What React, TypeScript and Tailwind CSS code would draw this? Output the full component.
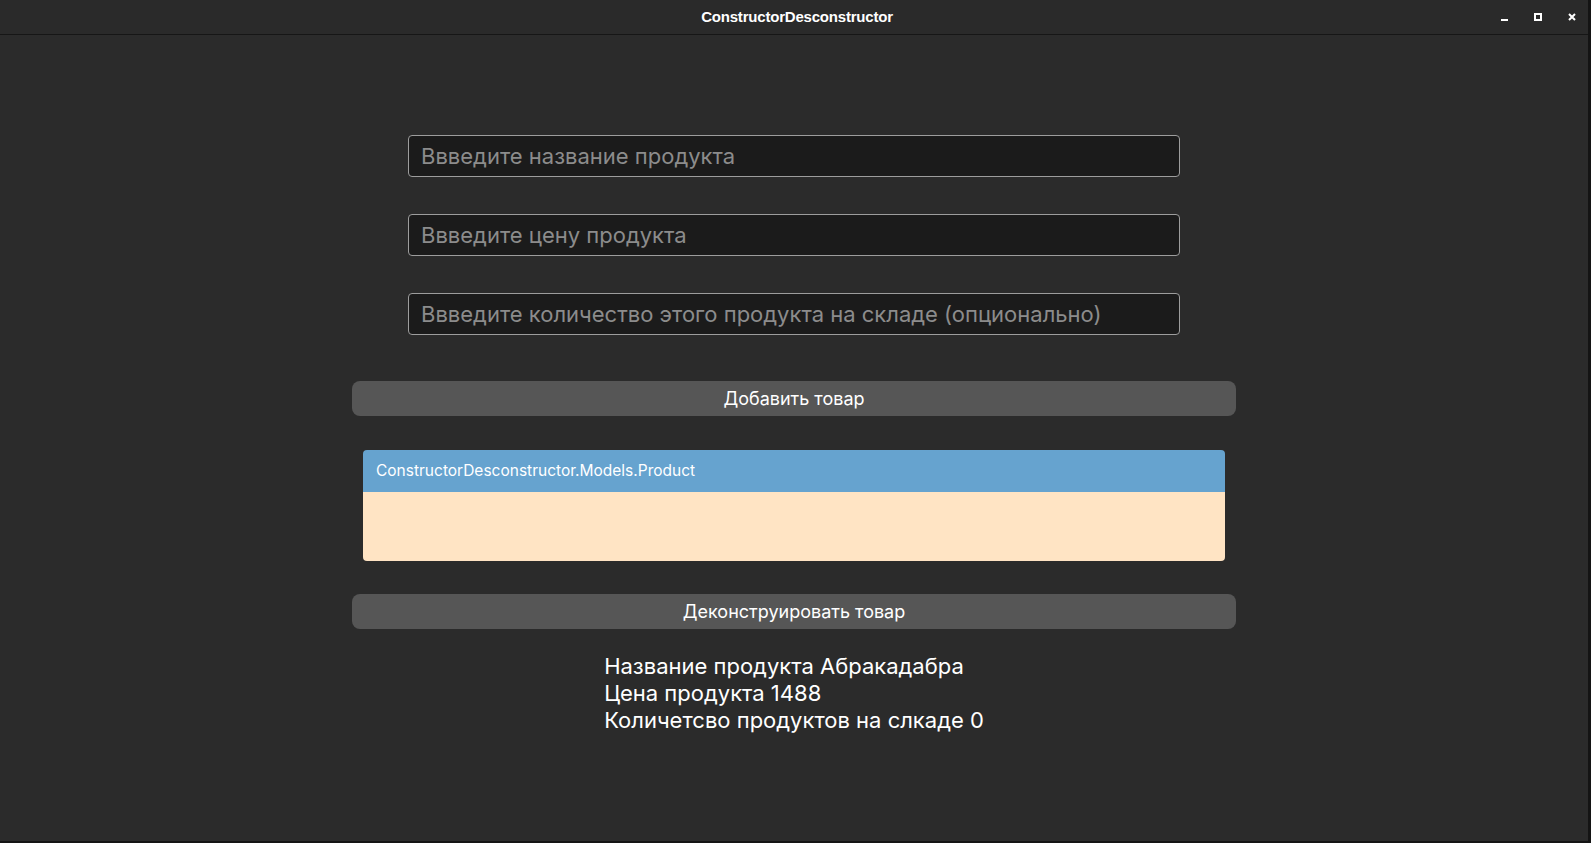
import React from "react";

export default function App() {
  return (
    <div className="w-[1591px] h-[843px] bg-[#141414] overflow-hidden flex flex-col">
      <div className="flex-1 flex flex-col mr-[3px] mb-[2px] bg-[#2b2b2b]">
        {/* Title bar */}
        <div className="h-[35px] shrink-0 bg-[#2a2a2a] border-b border-[#161616] flex items-center relative">
          <div className="flex-1 text-center text-white text-[15px] font-bold font-['Liberation_Sans',sans-serif] tracking-[-0.2px] pl-[6px]">
            ConstructorDesconstructor
          </div>
          <div className="absolute right-[12px] top-0 h-[34px] flex items-center gap-[26px]">
            <div className="w-[7px] h-[8px] flex items-end">
              <div className="w-[7px] h-[2px] bg-white" />
            </div>
            <div className="w-[8px] h-[8px] border-[2px] border-white mb-[1px]" />
            <svg width="8" height="8" viewBox="0 0 8 8" className="mb-[1px]">
              <path d="M1 1 L7 7 M7 1 L1 7" stroke="white" strokeWidth="2" />
            </svg>
          </div>
        </div>

        {/* Content */}
        <div className="flex flex-col items-center font-['Inter',sans-serif] pt-[100px]">
          <div className="w-[772px] flex flex-col gap-[37px]">
            <input
              className="h-[42px] w-full bg-[#1b1b1b] border border-[#9d9d9d] rounded-[4px] px-[12px] text-[22px] text-white placeholder:text-[#8c8c8c] outline-none"
              placeholder="Ввведите название продукта"
            />
            <input
              className="h-[42px] w-full bg-[#1b1b1b] border border-[#9d9d9d] rounded-[4px] px-[12px] text-[22px] text-white placeholder:text-[#8c8c8c] outline-none"
              placeholder="Ввведите цену продукта"
            />
            <input
              className="h-[42px] w-full bg-[#1b1b1b] border border-[#9d9d9d] rounded-[4px] px-[12px] text-[22px] text-white placeholder:text-[#8c8c8c] outline-none"
              placeholder="Ввведите количество этого продукта на складе (опционально)"
            />
          </div>

          <button className="mt-[46px] w-[884px] h-[35px] bg-[#565656] rounded-[8px] text-white text-[18px] flex items-center justify-center">
            Добавить товар
          </button>

          <div className="mt-[34px] w-[862px] rounded-[4px] overflow-hidden flex flex-col">
            <div className="h-[42px] bg-[#66a3cf] text-white text-[15.5px] flex items-center px-[13px]">
              ConstructorDesconstructor.Models.Product
            </div>
            <div className="h-[69px] bg-[#ffe4c4]" />
          </div>

          <button className="mt-[33px] w-[884px] h-[35px] bg-[#565656] rounded-[8px] text-white text-[18px] flex items-center justify-center">
            Деконструировать товар
          </button>

          <div className="mt-[24px] flex flex-col text-white text-[22px] leading-[27px]">
            <div>Название продукта Абракадабра</div>
            <div>Цена продукта 1488</div>
            <div>Количетсво продуктов на слкаде 0</div>
          </div>
        </div>
      </div>
    </div>
  );
}
